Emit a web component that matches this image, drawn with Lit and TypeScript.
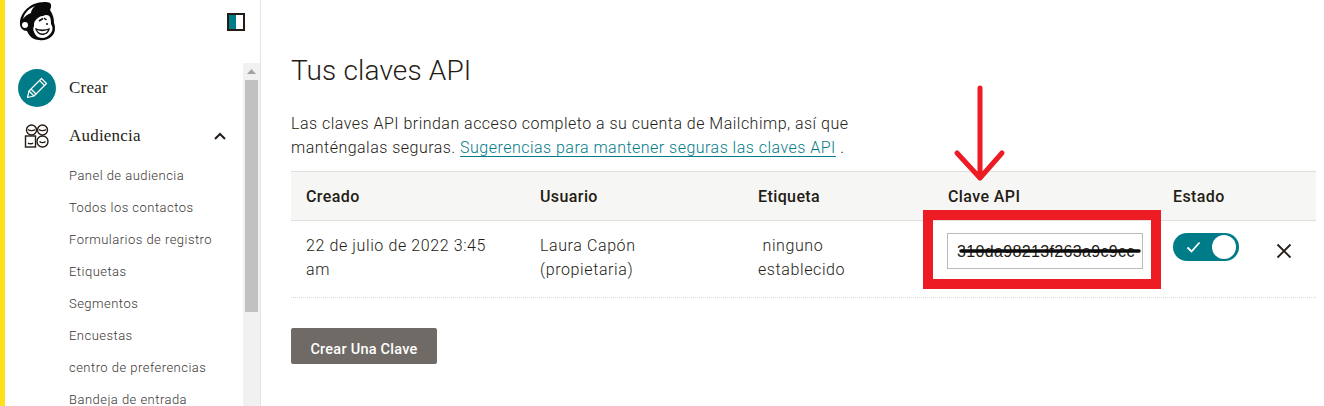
import { LitElement, html, css } from "lit";
import { customElement } from "lit/decorators.js";

@customElement("app-root")
export class AppRoot extends LitElement {
  static styles = css`
    :host { display: block; width: 1324px; height: 406px; overflow: hidden; background: #fff; position: relative; font-family: Roboto, "Liberation Sans", sans-serif; color: #241c15; }
    .page { display: flex; height: 406px; }
    .stripe { width: 5px; background: #ffe01b; flex: none; }
    .side { width: 255px; flex: none; border-right: 1px solid #e4e4e2; display: flex; flex-direction: column; overflow: hidden; }
    .sidehead { height: 63px; flex: none; display: flex; justify-content: space-between; padding: 1px 15px 0 13px; box-sizing: border-box; }
    .logo { width: 38px; height: 41px; }
    .toggle { width: 18px; height: 18px; margin-top: 12px; box-sizing: border-box; border: 2px solid #241c15; display: flex; }
    .toggle i { width: 7px; background: #007c89; display: block; }
    .sidebody { flex: 1; display: flex; min-height: 0; }
    .nav { flex: 1; min-width: 0; padding: 1px 0 0 13px; }
    .navitem { display: flex; align-items: center; height: 48px; font-family: "Liberation Serif", serif; font-size: 17px; letter-spacing: 0.2px; color: #241c15; }
    .navicon { width: 38px; height: 38px; margin-right: 13px; flex: none; display: flex; align-items: center; justify-content: center; }
    .navicon.circle { border-radius: 50%; background: #007c89; }
    .chev { margin-left: auto; margin-right: 17px; }
    .sub { display: flex; flex-direction: column; padding: 0 0 0 51px; }
    .sub span { height: 32px; line-height: 32px; font-size: 13px; letter-spacing: 0.47px; font-weight: 300; color: #3a3632; white-space: nowrap; }
    .scroll { width: 17px; flex: none; background: #f1f1f1; display: flex; flex-direction: column; align-items: center; }
    .scroll .up { height: 17px; display: flex; align-items: center; justify-content: center; }
    .scroll .thumb { width: 13px; height: 232px; background: #c1c1c1; }
    main { flex: 1; min-width: 0; padding: 55px 8px 0 30px; }
    h1 { margin: 0; font-weight: 300; font-size: 28px; line-height: 32px; letter-spacing: 0.15px; color: #241c15; }
    p { margin: 25px 0 0; font-size: 16px; line-height: 24px; width: 570px; font-weight: 300; letter-spacing: 0.48px; color: #241c15; }
    a { color: #007c89; text-decoration: underline; text-underline-offset: 3px; }
    .table { margin-top: 11px; }
    .row { display: grid; grid-template-columns: 234px 218px 190px 225px 1fr; padding-left: 15px; }
    .row.head { height: 50px; box-sizing: border-box; align-items: center; background: #f6f6f4; border-top: 1px solid #e0e0de; border-bottom: 1px solid #e0e0de; font-size: 16px; font-weight: 500; letter-spacing: 0.4px; }
    .row.body { height: 77px; border-bottom: 1px dotted #d8d8d6; font-size: 16px; line-height: 24px; padding-top: 12px; box-sizing: border-box; font-weight: 300; letter-spacing: 0.6px; }
    .cell { padding-top: 1px; }
    .input { width: 196px; height: 36px; box-sizing: border-box; border: 1px solid #bdbbb9; margin: 0 0 0 -1px; padding: 0 9px; font-family: "Liberation Sans", Arial, sans-serif; font-size: 16px; font-weight: 400; line-height: 36px; letter-spacing: 0.35px; overflow: hidden; white-space: nowrap; color: #241c15; }
    .state { display: flex; align-items: flex-start; gap: 37px; }
    .switch { width: 66px; height: 28px; border-radius: 14px; background: #007c89; display: flex; align-items: center; justify-content: space-between; padding: 0 3px 0 13px; box-sizing: border-box; }
    .knob { width: 24px; height: 24px; border-radius: 50%; background: #fff; }
    .x { margin-top: 10px; }
    button { display: block; margin-top: 30px; width: 146px; height: 36px; background: #6f6a66; color: #fff; border: 0; border-radius: 2px; font: 500 14.5px Roboto, "Liberation Sans", sans-serif; letter-spacing: 0.25px; padding: 6px 0 0; }
    .redbox { position: absolute; left: 923px; top: 210px; width: 238px; height: 79px; box-sizing: border-box; border: 10px solid #ed1c24; }
    .over { position: absolute; left: 0; top: 0; pointer-events: none; }
  `;

  render() {
    const subs = ["Panel de audiencia", "Todos los contactos", "Formularios de registro", "Etiquetas", "Segmentos", "Encuestas", "centro de preferencias", "Bandeja de entrada"];
    return html`
      <div class="page">
        <div class="stripe"></div>
        <div class="side">
          <div class="sidehead">
            <svg class="logo" viewBox="0 0 38 41">
              <path d="M2 20C3 13 9 6 16 3 21 1 28 0 32 2c2 2 1 5 0 7 3 4 4 9 4 13 2 5 1 10-2 13-4 4-9 5-13 4-6 0-10-4-12-9-4 0-7-3-7-7 0-2 0-3 0-3z" fill="#0a0a0a"/>
              <path d="M5 18c1-5 5-10 12-13-3 3-4 5-4 7-3 1-6 3-8 6z" fill="#fff"/>
              <circle cx="7" cy="24" r="3" fill="#fff"/>
              <path d="M17 20c2-3 5-5 8-5 3-2 6-1 7 1 1 3 1 5 1 7 2 3 2 6 0 9-2 3-6 5-9 5-4 0-7-3-8-6-1-2-1-4 0-6 0-2 0-4 1-5z" fill="#fff"/>
              <path d="M17 27c5 2 10 2 15 0-1 5-4 7-8 7-3 0-6-3-7-7z" fill="#111"/>
              <path d="M19 29c3 1.500 7 1.500 11 0-1 2.500-3 3.500-5.500 3.500-2.500 0-4.500-1.500-5.500-3.500z" fill="#fff"/>
              <path d="M21 20l4-2.500M26 17l2.500 2" stroke="#111" stroke-width="1.500" fill="none"/>
              <circle cx="29" cy="23" r="1" fill="#111"/>
            </svg>
            <div class="toggle"><i></i></div>
          </div>
          <div class="sidebody">
            <div class="nav">
              <div class="navitem">
                <span class="navicon circle">
                  <svg width="24" height="24" viewBox="0 0 24 24" fill="none" stroke="#fff" stroke-width="1.200" stroke-linejoin="round"><path d="M2.500 21.500l1.500-6.500L16.500 2.500 21.500 7.500 9 20z"/><path d="M4 15l5 5M14.500 4.500l5 5M6 13l5 5"/></svg>
                </span>
                Crear
              </div>
              <div class="navitem">
                <span class="navicon">
                  <svg width="26" height="26" viewBox="0 0 26 26" fill="none" stroke="#241c15" stroke-width="1.400"><circle cx="7.500" cy="7" r="5"/><circle cx="18.500" cy="7" r="5"/><rect x="1.500" y="13" width="10" height="11" fill="#fff"/><circle cx="18.500" cy="18.500" r="5.500" fill="#fff"/><path d="M4 6.500c1.500 1.500 5.500 1.500 7 0M15 6.500c1.500 1.500 5.500 1.500 7 0M4 20c1 1 4 1 5 0M15.500 18.500c1.500 1.500 4.500 1.500 6 0"/></svg>
                </span>
                Audiencia
                <svg class="chev" width="12" height="8" viewBox="0 0 12 8" fill="none" stroke="#241c15" stroke-width="2"><path d="M1 7l5-5 5 5"/></svg>
              </div>
              <div class="sub">${subs.map((s) => html`<span>${s}</span>`)}</div>
            </div>
            <div class="scroll">
              <div class="up"><svg width="9" height="5" viewBox="0 0 9 5"><path d="M4.500 0 9 5H0z" fill="#a3a3a3"/></svg></div>
              <div class="thumb"></div>
            </div>
          </div>
        </div>
        <main>
          <h1>Tus claves API</h1>
          <p>Las claves API brindan acceso completo a su cuenta de Mailchimp, así que manténgalas seguras. <a>Sugerencias para mantener seguras las claves API</a> .</p>
          <div class="table">
            <div class="row head"><span>Creado</span><span>Usuario</span><span>Etiqueta</span><span>Clave API</span><span>Estado</span></div>
            <div class="row body">
              <span class="cell">22 de julio de 2022 3:45<br>am</span>
              <span class="cell">Laura Capón<br>(propietaria)</span>
              <span class="cell">&nbsp;ninguno<br>establecido</span>
              <div class="input">310da98213f263a9c9cc</div>
              <div class="state">
                <div class="switch">
                  <svg width="15" height="12" viewBox="0 0 15 12" fill="none" stroke="#fff" stroke-width="1.800"><path d="M1.500 6.500 5.500 10.500l8-9"/></svg>
                  <span class="knob"></span>
                </div>
                <svg class="x" width="16" height="16" viewBox="0 0 16 16" fill="none" stroke="#241c15" stroke-width="1.800"><path d="M1.500 1.500l13 13M14.500 1.500l-13 13"/></svg>
              </div>
            </div>
          </div>
          <button>Crear Una Clave</button>
        </main>
      </div>
      <div class="redbox"></div>
      <svg class="over" width="1324" height="406" fill="none">
        <path d="M961 251 1139 251" stroke="#0b0b0b" stroke-width="3.500" stroke-linecap="round"/>
        <path d="M980 88V178M957 153 980 178 1002 153" stroke="#ed1c24" stroke-width="5" stroke-linecap="round" stroke-linejoin="round"/>
      </svg>
    `;
  }
}
